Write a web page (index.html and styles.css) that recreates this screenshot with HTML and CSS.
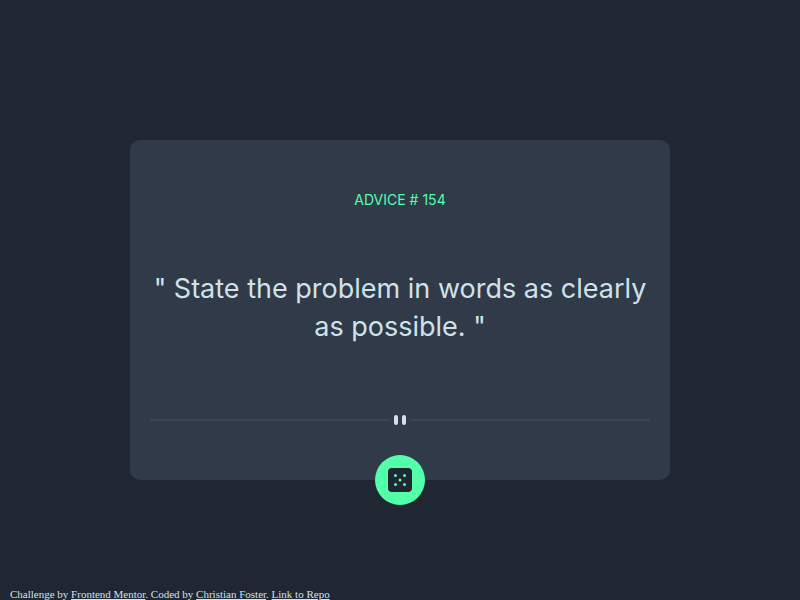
FILE: index.html
```html
<!DOCTYPE html>
<html lang="en">
<head>
<meta charset="utf-8">
<title>Advice Generator</title>
<link rel="stylesheet" href="styles.css">
</head>
<body>
<main>
  <section class="card">
    <h1 class="label">ADVICE # 154</h1>
    <p class="quote">" State the problem in words as clearly as possible. "</p>
    <div class="divider">
      <svg width="20" height="16" viewBox="0 0 20 16" fill="#cee3e9" aria-hidden="true"><rect x="4" y="3" width="4" height="10" rx="2"/><rect x="12" y="3" width="4" height="10" rx="2"/></svg>
    </div>
    <button class="dice" type="button" aria-label="New advice">
      <svg width="24" height="24" viewBox="0 0 24 24" aria-hidden="true"><path fill="#202733" d="M20 0H4a4.005 4.005 0 0 0-4 4v16a4.005 4.005 0 0 0 4 4h16a4.005 4.005 0 0 0 4-4V4a4.005 4.005 0 0 0-4-4ZM7.500 18a1.500 1.500 0 1 1 0-3 1.500 1.500 0 0 1 0 3Zm0-9a1.500 1.500 0 1 1 0-3 1.500 1.500 0 0 1 0 3Zm4.500 4.500a1.500 1.500 0 1 1 0-3 1.500 1.500 0 0 1 0 3Zm4.500 4.500a1.500 1.500 0 1 1 0-3 1.500 1.500 0 0 1 0 3Zm0-9a1.500 1.500 0 1 1 0-3 1.500 1.500 0 0 1 0 3Z"/></svg>
    </button>
  </section>
</main>
<footer>Challenge by <a href="#">Frontend Mentor</a>. Coded by <a href="#">Christian Foster</a>. <a href="#">Link to Repo</a></footer>
</body>
</html>
```
FILE: styles.css
```css
* { box-sizing: border-box; }
body {
  margin: 0;
  min-height: 100vh;
  display: flex;
  flex-direction: column;
  background: #202733;
  color: #cee3e9;
}
main {
  flex: 1;
  display: flex;
  flex-direction: column;
  align-items: center;
  justify-content: center;
  padding: 44px 16px 12px;
}
.card {
  position: relative;
  width: 100%;
  max-width: 540px;
  padding: 50px 20px 52px;
  border-radius: 10px;
  background: #313a48;
  text-align: center;
  font-family: Inter, sans-serif;
}
.label {
  margin: 0 0 60px;
  color: #53ffaa;
  font-size: 14px;
  line-height: 20px;
  font-weight: 400;
}
.quote {
  margin: 0 0 66px;
  font-size: 27px;
  line-height: 38px;
}
.divider {
  display: flex;
  align-items: center;
  gap: 1px;
}
.divider::before,
.divider::after {
  content: "";
  flex: 1;
  height: 2px;
  background: #3b4453;
}
.divider svg { display: block; }
.dice {
  position: absolute;
  left: 50%;
  bottom: -25px;
  width: 50px;
  height: 50px;
  margin-left: -25px;
  padding: 0;
  border: 0;
  border-radius: 50%;
  display: grid;
  place-items: center;
  background: #53ffaa;
  cursor: pointer;
}
footer {
  padding: 0 10px;
  font: 400 11px/12px "Liberation Serif", serif;
}
footer a { color: inherit; }
```
